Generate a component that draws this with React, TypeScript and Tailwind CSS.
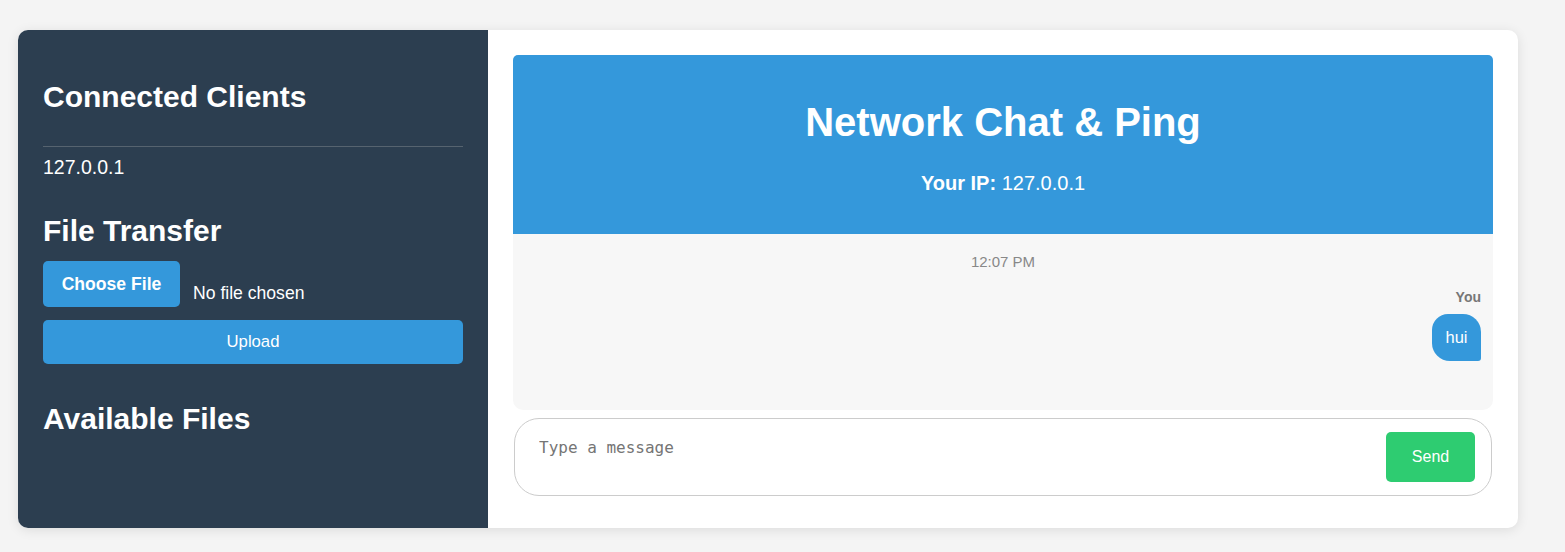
import React from 'react';

const sans = { fontFamily: '"Liberation Sans", Arial, sans-serif' };

const Sidebar: React.FC = () => {
  return (
    <aside className="w-[470px] shrink-0 bg-[#2c3e50] px-[25px] pt-[50px] text-white">
      <h2 className="text-[30px] font-bold leading-[34px]">Connected Clients</h2>
      <div className="mt-[32px] h-px bg-[#56636f]" />
      <ul>
        <li className="pt-[9px] text-[19.5px] leading-[23px]">127.0.0.1</li>
      </ul>

      <h2 className="mt-[35px] text-[30px] font-bold leading-[34px]">File Transfer</h2>
      <div className="mt-[13px] flex items-start">
        <button className="h-[46px] w-[137px] rounded-[5px] bg-[#3498db] text-[17.6px] font-bold text-white">
          Choose File
        </button>
        <span className="ml-[13px] mt-[22px] text-[17.6px] leading-[20px]">No file chosen</span>
      </div>
      <button className="mt-[13px] h-[44px] w-full rounded-[5px] bg-[#3498db] text-[16.7px] text-white">
        Upload
      </button>

      <h2 className="mt-[38px] text-[30px] font-bold leading-[34px]">Available Files</h2>
    </aside>
  );
};

const ChatPanel: React.FC = () => {
  return (
    <main className="flex flex-1 flex-col p-[25px] pb-[32px]">
      <header className="rounded-t-[5px] bg-[#3498db] pb-[39px] pt-[44px] text-center text-white">
        <h1 className="text-[40px] font-bold leading-[46px]">Network Chat &amp; Ping</h1>
        <p className="mt-[27px] text-[20px] leading-[23px]">
          <strong>Your IP:</strong> 127.0.0.1
        </p>
      </header>

      <div className="flex h-[176px] flex-col rounded-b-[10px] bg-[#f7f7f7] px-[12px] pt-[19px]">
        <div className="text-center text-[15px] leading-[17px] text-[#888]">12:07 PM</div>
        <div className="mt-[19px] self-end text-[14px] font-bold leading-[16px] text-[#777]">You</div>
        <div className="mt-[9px] self-end rounded-bl-[18px] rounded-br-[3px] rounded-tl-[16px] rounded-tr-[18px] bg-[#3498db] px-[13.5px] py-[14px] text-[16.5px] leading-[19px] text-white">
          hui
        </div>
      </div>

      <div className="mx-[1px] mt-[8px] flex h-[78px] items-center rounded-[25px] border border-[#ccc] pl-[24px] pr-[16px]">
        <textarea
          placeholder="Type a message"
          className="h-[50px] flex-1 resize-none bg-transparent pt-[6px] text-[16px] leading-[19px] outline-none placeholder:text-[#757575]"
          style={{ fontFamily: '"DejaVu Sans Mono", "Liberation Mono", monospace' }}
        />
        <button className="h-[50px] w-[89px] rounded-[5px] bg-[#2ecc71] text-[16px] text-white">Send</button>
      </div>
    </main>
  );
};

export default function App() {
  return (
    <div className="min-h-screen bg-[#f4f4f4] pl-[18px] pt-[30px]" style={sans}>
      <div className="flex w-[1500px] overflow-hidden rounded-[10px] bg-white shadow-[0_2px_12px_rgba(0,0,0,0.1)]">
        <Sidebar />
        <ChatPanel />
      </div>
    </div>
  );
}
